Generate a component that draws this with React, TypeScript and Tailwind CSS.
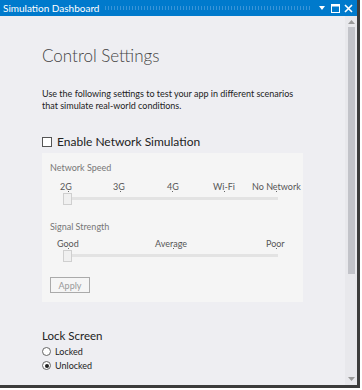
const font = { fontFamily: 'Lato, "Open Sans", sans-serif' }

function Slider({ labels, offsets, dots }: { labels: string[]; offsets: number[]; dots: number[] }) {
  return (
    <div className="relative h-[23px] w-[250px]">
      {labels.map((l, i) => (
        <span key={l} className="absolute top-0 whitespace-nowrap text-[9px] leading-none text-[#555]" style={{ left: offsets[i] }}>
          {l}
        </span>
      ))}
      {dots.map((d) => (
        <span key={d} className="absolute top-[9px] h-[1px] w-[1px] bg-[#666]" style={{ left: d }} />
      ))}
      <div className="absolute left-[15px] top-[15px] h-[3px] w-[213px] bg-[#e3e3e3]" />
      <div className="absolute left-[13px] top-[11px] h-[12px] w-[9px] border border-[#cfcfcf] bg-[#f0f0f0]" />
    </div>
  )
}

export default function App() {
  return (
    <div className="h-[390px] w-[362px] bg-white" style={font}>
      <div className="h-[388px] w-[360px] border-b-[3px] border-r-[3px] border-[#3c3c3c]">
        <div className="flex h-[16px] items-center bg-[#007acc] pl-[3px] pr-[4px] text-white">
          <span className="text-[10px] leading-none">Simulation Dashboard</span>
          <div className="ml-[5px] mr-[4px] h-[4px] flex-1 bg-[radial-gradient(circle,#3a95d8_0.6px,transparent_0.7px)] bg-[length:3px_2px]" />
          <svg width="8" height="6" viewBox="0 0 8 6" className="ml-[3px]"><path d="M1 1h6L4 5z" fill="white" /></svg>
          <svg width="9" height="9" viewBox="0 0 9 9" className="ml-[5px]"><rect x="0.5" y="0.5" width="8" height="8" fill="none" stroke="white" /><rect x="0" y="0" width="9" height="2.5" fill="white" /></svg>
          <svg width="9" height="9" viewBox="0 0 9 9" className="ml-[4px]"><path d="M1 1l7 7M8 1l-7 7" stroke="white" strokeWidth="1.6" /></svg>
        </div>
        <div className="flex h-[369px] bg-[#eeeef2]">
          <div className="flex-1 pl-[42px] pt-[31px] text-[#333]">
            <h1 className="text-[17px] font-light leading-none text-[#444]">Control Settings</h1>
            <p className="mt-[24px] w-[256px] text-[9px] leading-[12px] text-[#222]">
              Use the following settings to test your app in different scenarios that simulate real-world conditions.
            </p>
            <label className="mt-[24px] flex h-[12px] items-center gap-[5px] text-[12px] leading-none text-[#222]">
              <span className="h-[10px] w-[10px] border border-[#555] bg-white" />
              Enable Network Simulation
            </label>
            <div className="mt-[5px] w-[261px] bg-[#f5f5f5] px-[8px] pb-[7px] pt-[10px]">
              <div className="text-[9px] leading-none text-[#777]">Network Speed</div>
              <div className="mt-[10px]">
                <Slider labels={['2G', '3G', '4G', 'Wi-Fi', 'No Network']} offsets={[10, 63, 117, 163, 202]} dots={[18, 70, 122, 174, 226]} />
              </div>
              <div className="mt-[17px] text-[9px] leading-none text-[#777]">Signal Strength</div>
              <div className="mt-[8px]">
                <Slider labels={['Good', 'Average', 'Poor']} offsets={[7, 105, 216]} dots={[18, 123, 226]} />
              </div>
              <button className="mt-[15px] h-[16px] w-[40px] border border-[#aaa] bg-[#f5f5f5] text-[9px] leading-none text-[#999]">Apply</button>
            </div>
            <div className="mt-[28px] text-[11.5px] leading-none text-[#222]">Lock Screen</div>
            <div className="mt-[6px] flex h-[9px] items-center gap-[4px] text-[9px] leading-none text-[#222]">
              <span className="h-[9px] w-[9px] rounded-full border border-[#666] bg-white" />
              Locked
            </div>
            <div className="mt-[5px] flex h-[9px] items-center gap-[4px] text-[9px] leading-none text-[#222]">
              <span className="flex h-[9px] w-[9px] items-center justify-center rounded-full border border-[#666] bg-white">
                <span className="h-[4px] w-[4px] rounded-full bg-[#222]" />
              </span>
              Unlocked
            </div>
          </div>
          <div className="flex w-[12px] flex-col items-center bg-[#e8e8ec] py-[3px]">
            <svg width="7" height="5" viewBox="0 0 7 5"><path d="M0 5h7L3.5 1z" fill="#999" /></svg>
            <div className="mt-[3px] h-[247px] w-[7px] bg-[#c2c3c9]" />
            <div className="flex-1" />
            <svg width="7" height="5" viewBox="0 0 7 5"><path d="M0 0h7L3.5 4z" fill="#999" /></svg>
          </div>
        </div>
      </div>
    </div>
  )
}
